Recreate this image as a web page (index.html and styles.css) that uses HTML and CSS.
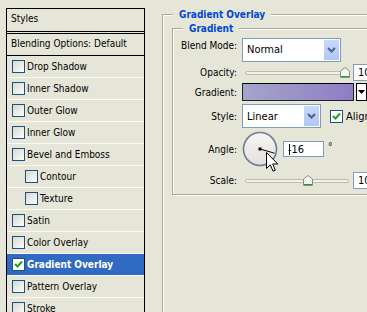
FILE: index.html
```html
<!DOCTYPE HTML>
<html>
  <head>
    <meta http-equiv="Content-type" content="text/html;charset=UTF-8">
    <title>Layer Style - Gradient Overlay</title>
    <link rel="stylesheet" href="styles.css">
  </head>
  <body>
    <div class="page">
      <div class="styles">
        <div class="styles-head">Styles</div>
        <div class="styles-blend">Blending Options: Default</div>
        <div class="item"><span class="box"></span>Drop Shadow</div>
        <div class="item"><span class="box"></span>Inner Shadow</div>
        <div class="item"><span class="box"></span>Outer Glow</div>
        <div class="item"><span class="box"></span>Inner Glow</div>
        <div class="item"><span class="box"></span>Bevel and Emboss</div>
        <div class="item sub"><span class="box"></span>Contour</div>
        <div class="item sub"><span class="box"></span>Texture</div>
        <div class="item"><span class="box"></span>Satin</div>
        <div class="item"><span class="box"></span>Color Overlay</div>
        <div class="item selected"><span class="box checked"><svg width="11" height="11" viewBox="0 0 11 11"><path d="M2 5 L4.5 7.5 L9 2.5" fill="none" stroke="#21a121" stroke-width="2"/></svg></span>Gradient Overlay</div>
        <div class="item"><span class="box"></span>Pattern Overlay</div>
        <div class="item"><span class="box"></span>Stroke</div>
      </div>

      <fieldset class="group outer">
        <legend>Gradient Overlay</legend>
        <fieldset class="group inner">
          <legend>Gradient</legend>
          <div class="form">
            <label class="lbl lbl-top">Blend Mode:</label>
            <div class="ctl">
              <div class="combo combo-wide"><span>Normal</span><span class="combo-btn"><svg width="9" height="6" viewBox="0 0 9 6"><path d="M1 1 L4.5 4.5 L8 1" fill="none" stroke="#4d6185" stroke-width="2"/></svg></span></div>
            </div>

            <label class="lbl">Opacity:</label>
            <div class="ctl">
              <div class="slider"><div class="track"></div><svg class="thumb" style="left:95px" width="10" height="11" viewBox="0 0 10 11"><path d="M0.5 4 L5 0.5 L9.5 4 V10.5 H0.5 Z" fill="#f4f4f0" stroke="#8c8c84"/><path d="M1 9 H9 V10 H1 Z" fill="#21a121"/></svg></div>
              <div class="num num-cut">10</div>
            </div>

            <label class="lbl">Gradient:</label>
            <div class="ctl">
              <div class="swatch"></div>
              <div class="swatch-btn"><svg width="7" height="4" viewBox="0 0 7 4"><path d="M0 0 H7 L3.5 4 Z" fill="#000"/></svg></div>
            </div>

            <label class="lbl">Style:</label>
            <div class="ctl">
              <div class="combo combo-narrow"><span>Linear</span><span class="combo-btn"><svg width="9" height="6" viewBox="0 0 9 6"><path d="M1 1 L4.5 4.5 L8 1" fill="none" stroke="#4d6185" stroke-width="2"/></svg></span></div>
              <span class="tick"><svg width="11" height="11" viewBox="0 0 11 11"><path d="M2 5 L4.5 7.5 L9 2.5" fill="none" stroke="#21a121" stroke-width="2"/></svg></span>
              <span class="tick-text">Align</span>
            </div>

            <label class="lbl">Angle:</label>
            <div class="ctl">
              <div class="dial">
                <svg width="36" height="36" viewBox="0 0 36 36">
                  <defs>
                    <linearGradient id="dialfill" x1="0" y1="0" x2="0" y2="1">
                      <stop offset="0" stop-color="#f6f6f4"/>
                      <stop offset="1" stop-color="#e4e0da"/>
                    </linearGradient>
                  </defs>
                  <circle cx="18" cy="18" r="16.5" fill="url(#dialfill)" stroke="#6d7b9c" stroke-width="1.6"/>
                  <rect x="16.5" y="16.5" width="3" height="3" fill="#000"/>
                  <path d="M18 18 L32.5 22.2" stroke="#000" stroke-width="1"/>
                </svg>
                <svg class="pointer" width="13" height="21" viewBox="0 0 13 21"><path d="M0.5 0.5 V16.5 L4.3 12.8 L7 19.2 L9.3 18.2 L6.7 12 H11.8 Z" fill="#fff" stroke="#000"/></svg>
              </div>
              <div class="num num-angle"><span class="caret"></span>-16</div>
              <span class="deg">&deg;</span>
            </div>

            <label class="lbl">Scale:</label>
            <div class="ctl">
              <div class="slider"><div class="track"></div><svg class="thumb" style="left:58px" width="10" height="11" viewBox="0 0 10 11"><path d="M0.5 4 L5 0.5 L9.5 4 V10.5 H0.5 Z" fill="#f4f4f0" stroke="#8c8c84"/><path d="M1 9 H9 V10 H1 Z" fill="#21a121"/></svg></div>
              <div class="num num-cut">10</div>
            </div>
          </div>
        </fieldset>
      </fieldset>
    </div>
  </body>
</html>
```

FILE: styles.css
```css
html, body {
margin: 0;
padding: 0;
}
body {
width: 367px;
height: 312px;
overflow: hidden;
background: #e6e6d8;
font-family: "DejaVu Sans Condensed", "DejaVu Sans", sans-serif;
font-size: 10px;
line-height: 13px;
color: #000;
}
.page {
display: flex;
align-items: flex-start;
padding: 8px 0 0 6px;
}

/* style list on the left */
.styles {
flex: none;
width: 137px;
height: 304px;
overflow: hidden;
border: 1px solid #000;
border-bottom: none;
}
.styles-head {
height: 22px;
line-height: 20px;
padding-left: 4px;
border-bottom: 3px double #000;
}
.styles-blend {
height: 21px;
line-height: 20px;
padding-left: 4px;
border-bottom: 1px solid #000;
}
.item {
display: flex;
align-items: center;
height: 21px;
padding-left: 5px;
border-bottom: 1px solid #fbfbf6;
white-space: nowrap;
}
.item.sub {
padding-left: 18px;
}
.item.selected {
background: #316ac5;
color: #fff;
font-weight: bold;
}
.box {
flex: none;
width: 11px;
height: 11px;
margin-right: 2px;
border: 1px solid #1c5180;
background: linear-gradient(135deg, #d8d8d2, #f6f6f2 80%);
}
.box.checked, .tick {
background: #fff;
}
.box svg, .tick svg {
display: block;
}

/* group boxes */
.group {
margin: 0;
padding: 0;
border: 1px solid #aca899;
box-shadow: inset 1px 1px 0 #fff, 1px 1px 0 #fff;
}
.group legend {
padding: 0 6px;
background: #e6e6d8;
color: #0046d5;
font-weight: bold;
line-height: 13px;
}
.outer {
flex: none;
width: 260px;
height: 330px;
margin-left: 17px;
padding: 1px 0 0 9px;
}
.outer > legend {
margin-left: 1px;
}
.inner {
width: 240px;
padding: 2px 0 2px 0;
}
.inner > legend {
margin-left: 10px;
}

/* form grid */
.form {
display: grid;
grid-template-columns: 64px auto;
grid-template-rows: 25px 20px 20px 28px 38px 24px;
column-gap: 5px;
}
.lbl {
align-self: center;
text-align: right;
white-space: nowrap;
}
.lbl-top {
align-self: start;
padding-top: 2px;
}
.ctl {
display: flex;
align-items: center;
white-space: nowrap;
}

.combo {
display: flex;
align-items: center;
justify-content: space-between;
box-sizing: border-box;
height: 24px;
padding: 1px 1px 1px 4px;
border: 1px solid #7f9db9;
background: #fff;
font-size: 11px;
}
.combo-wide {
width: 99px;
}
.combo-narrow {
width: 79px;
}
.combo-btn {
display: flex;
align-items: center;
justify-content: center;
width: 15px;
height: 20px;
background: linear-gradient(#c9d8fb, #b1c6f6);
}

.slider {
position: relative;
width: 104px;
height: 11px;
margin-left: 3px;
}
.track {
position: absolute;
left: 0;
right: 0;
top: 4px;
height: 2px;
border: 1px solid #bdbdb3;
border-radius: 2px;
background: #f2f2ec;
}
.thumb {
position: absolute;
top: 0;
}

.num {
box-sizing: border-box;
height: 17px;
padding: 1px 0 0 4px;
border: 1px solid #7f9db9;
background: #fff;
font-size: 11px;
}
.num-cut {
width: 40px;
margin-left: 4px;
}
.num-angle {
position: relative;
width: 41px;
height: 16px;
margin-left: 5px;
padding-left: 4px;
}
.caret {
position: absolute;
left: 5px;
top: 2px;
width: 1px;
height: 11px;
background: #000;
}
.deg {
margin-left: 4px;
margin-top: -6px;
}

.swatch {
box-sizing: border-box;
width: 112px;
height: 18px;
border: 1px solid #222;
border-top-color: #000;
background: linear-gradient(to right, #a5a5cb, #8f7dc4);
}
.swatch-btn {
display: flex;
align-items: center;
justify-content: center;
box-sizing: border-box;
width: 11px;
height: 18px;
margin-left: 2px;
border: 1px solid #000;
background: #fff;
}

.tick {
flex: none;
width: 11px;
height: 11px;
margin-left: 9px;
border: 1px solid #1c5180;
}
.tick-text {
margin-left: 3px;
font-size: 11px;
}

.dial {
position: relative;
width: 36px;
height: 36px;
}
.dial svg {
display: block;
}
.pointer {
position: absolute;
left: 24px;
top: 21px;
}
```
